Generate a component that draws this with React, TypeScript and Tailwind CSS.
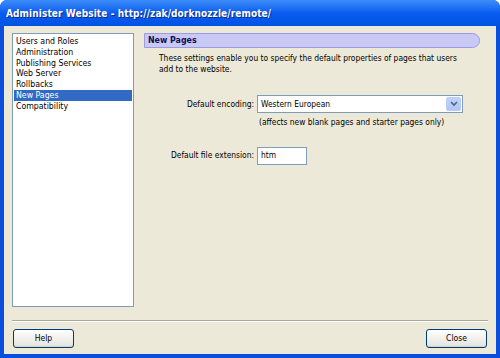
const sections = [
  "Users and Roles",
  "Administration",
  "Publishing Services",
  "Web Server",
  "Rollbacks",
  "New Pages",
  "Compatibility",
];

function XpButton({ label }: { label: string }) {
  return (
    <button className="w-[61px] h-[19px] rounded-[3px] border border-[#003c74] bg-gradient-to-b from-[#ffffff] to-[#e3e2dc] text-[8.5px] text-black leading-none shadow-[inset_0_-1px_0_#d6d0c5]">
      {label}
    </button>
  );
}

export default function App() {
  const selected = "New Pages";

  return (
    <div
      className="w-[500px] h-[358px] flex flex-col bg-[#0a4ee0] rounded-t-[7px] overflow-hidden"
      style={{ fontFamily: "'DejaVu Sans Condensed', Tahoma, 'Liberation Sans', sans-serif" }}
    >
      <div className="h-[26px] shrink-0 flex items-center px-[6px] bg-gradient-to-b from-[#3d8dfb] via-[#0a5cf0] to-[#0054e3]">
        <span className="text-white font-bold text-[10px] tracking-[0.1px] [text-shadow:1px_1px_0_#0a2a8a]">
          Administer Website - http://zak/dorknozzle/remote/
        </span>
      </div>

      <div className="flex-1 mx-[4px] mb-[4px] bg-[#ece9d8] flex flex-col">
        <div className="flex pt-[7px] pl-[8px]">
          <ul className="w-[122px] h-[274px] bg-white border border-[#7f9db9] pt-[2px] px-[1px] text-[8.7px] text-black">
            {sections.map((s) => (
              <li
                key={s}
                className={`h-[10.8px] leading-[10.8px] pl-[2px] ${
                  s === selected ? "bg-[#316ac5] text-white" : ""
                }`}
              >
                {s}
              </li>
            ))}
          </ul>

          <div className="ml-[10px] w-[336px] text-[8.4px] text-black">
            <div className="h-[15px] flex items-center pl-[3px] rounded-r-full border border-[#9b9be3] bg-[#c9c9f5] font-bold text-[8.8px] text-[#101050]">
              New Pages
            </div>

            <p className="mt-[5px] pl-[15px] pr-[14px] leading-[11px]">
              These settings enable you to specify the default properties of pages that users add to the website.
            </p>

            <div className="mt-[20px] grid grid-cols-[110px_1fr] gap-x-[3px] items-center">
              <span className="text-right">Default encoding:</span>
              <div className="w-[206px] h-[18px] border border-[#7f9db9] bg-white flex items-center justify-between pl-[3px] pr-[1px]">
                <span>Western European</span>
                <span className="w-[15px] h-[14px] rounded-[2px] bg-gradient-to-b from-[#c1d3fb] to-[#b1c6f6] border border-[#b9cdf7] flex items-center justify-center">
                  <svg width="8" height="6" viewBox="0 0 8 6">
                    <path d="M1 1 L4 4 L7 1" stroke="#4d6185" strokeWidth="1.6" fill="none" />
                  </svg>
                </span>
              </div>

              <span />
              <span className="pl-[2px] pt-[3px]">(affects new blank pages and starter pages only)</span>
            </div>

            <div className="mt-[18px] grid grid-cols-[110px_1fr] gap-x-[3px] items-center">
              <span className="text-right">Default file extension:</span>
              <div className="w-[50px] h-[18px] border border-[#7f9db9] bg-white flex items-center pl-[3px]">
                htm
              </div>
            </div>
          </div>
        </div>

        <div className="mt-[13px] mx-[8px] h-[2px] border-t border-[#aca899] border-b border-b-white" />

        <div className="flex justify-between px-[9px] mt-[7px]">
          <XpButton label="Help" />
          <XpButton label="Close" />
        </div>
      </div>
    </div>
  );
}
